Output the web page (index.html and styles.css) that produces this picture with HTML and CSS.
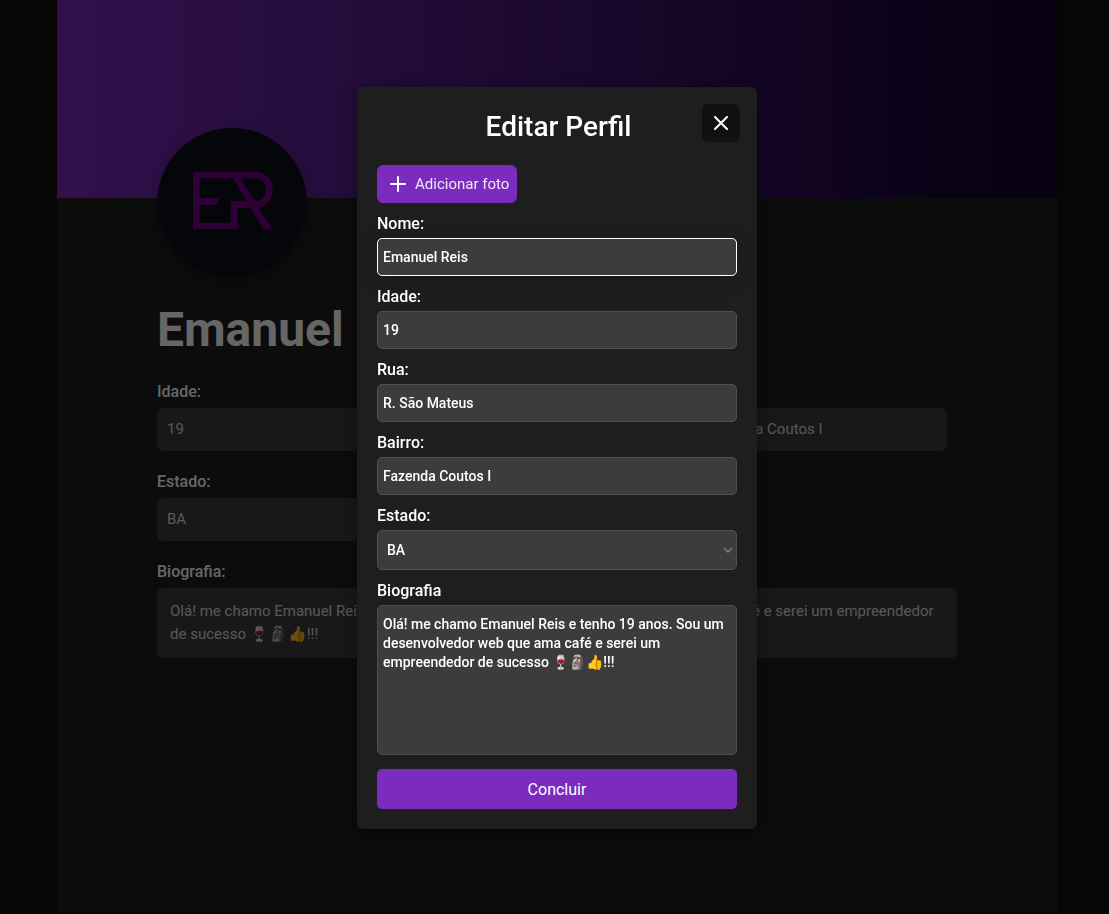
FILE: index.html
```html
<!DOCTYPE html>
<html lang="pt-BR">
<head>
<meta charset="utf-8">
<meta name="viewport" content="width=device-width, initial-scale=1">
<title>Editar Perfil</title>
<link rel="stylesheet" href="styles.css">
</head>
<body>
<main class="page">
  <div class="banner"></div>
  <section class="profile">
    <svg class="avatar" viewBox="21 24 450 450" role="img" aria-label="ER">
      <rect x="21" y="24" width="450" height="450" fill="#0d1117"/>
      <g fill="none" stroke="#77008c" stroke-width="20">
        <path d="M314 165H139V318H252V254H314A44.500 44.500 0 0 0 314 165"/>
      </g>
      <path fill="#77008c" d="M139 234H207L198 254H139ZM247 170L269 170L366 328H341Z"/>
    </svg>
    <h1 class="name">Emanuel Reis</h1>
    <dl class="facts">
      <div class="fact"><dt>Idade:</dt><dd>19</dd></div>
      <div class="fact"><dt>Rua:</dt><dd>R. São Mateus</dd></div>
      <div class="fact"><dt>Bairro:</dt><dd>Fazenda Coutos I</dd></div>
      <div class="fact"><dt>Estado:</dt><dd>BA</dd></div>
      <div class="fact fact-wide"><dt>Biografia:</dt><dd>Olá! me chamo Emanuel Reis e tenho 19 anos. Sou um desenvolvedor web que ama café e serei um empreendedor de sucesso 🍷🗿👍!!!</dd></div>
    </dl>
  </section>
</main>
<div class="overlay">
  <form class="modal" role="dialog" aria-labelledby="modal-title">
    <header class="modal-header">
      <h2 id="modal-title">Editar Perfil</h2>
      <button class="close" type="button" aria-label="Fechar">
        <svg viewBox="0 0 14 14" width="14" height="14"><path d="M1 1L13 13M13 1L1 13"/></svg>
      </button>
    </header>
    <button class="add-photo" type="button">
      <svg viewBox="0 0 16 16" width="16" height="16"><path d="M8 1V15M1 8H15"/></svg>
      Adicionar foto
    </button>
    <div class="field"><label for="nome">Nome:</label><input class="active" id="nome" type="text" value="Emanuel Reis"></div>
    <div class="field"><label for="idade">Idade:</label><input id="idade" type="text" value="19"></div>
    <div class="field"><label for="rua">Rua:</label><input id="rua" type="text" value="R. São Mateus"></div>
    <div class="field"><label for="bairro">Bairro:</label><input id="bairro" type="text" value="Fazenda Coutos I"></div>
    <div class="field">
      <label for="estado">Estado:</label>
      <div class="select-wrap">
        <select id="estado"><option>BA</option></select>
        <svg class="chevron" viewBox="0 0 10 6" width="10" height="6"><path d="M1 1L5 5L9 1"/></svg>
      </div>
    </div>
    <div class="field"><label for="bio">Biografia</label><textarea id="bio" spellcheck="false">Olá! me chamo Emanuel Reis e tenho 19 anos. Sou um desenvolvedor web que ama café e serei um empreendedor de sucesso 🍷🗿👍!!!</textarea></div>
    <button class="submit" type="submit">Concluir</button>
  </form>
</div>
</body>
</html>
```
FILE: styles.css
```css
* {
  box-sizing: border-box;
  margin: 0;
  padding: 0;
}

body {
  min-height: 100vh;
  padding-left: 5px;
  background: #101010;
  color: #fff;
  font-family: Roboto, "Noto Sans", sans-serif;
  font-size: 16px;
}

button, input, select, textarea {
  border: 0;
  color: inherit;
  font: inherit;
}

.page {
  max-width: 1000px;
  min-height: 912px;
  margin: 0 auto;
  background: #1e1e1e;
}

.banner {
  height: 198px;
  background: linear-gradient(to right, #7b2cbf, #10002b);
}

.profile {
  max-width: 800px;
  margin: -70px auto 0;
}

.avatar {
  display: block;
  width: 150px;
  height: 150px;
  border-radius: 50%;
  box-shadow: 0 4px 20px rgba(0, 0, 0, .2);
}

.name {
  margin: 22px 0 23px;
  font-size: 48px;
  line-height: 60px;
}

.facts {
  display: flex;
  flex-wrap: wrap;
  gap: 22px 20px;
}

.fact {
  width: 250px;
}

.fact-wide {
  width: 100%;
}

.fact dt {
  margin-bottom: 8px;
  font-weight: 500;
  line-height: 17px;
}

.fact dd {
  padding: 10px;
  border-radius: 6px;
  background: #3c3c3c;
  color: #ddd;
  font-size: 15px;
  line-height: 23px;
}

.fact-wide dd {
  padding: 12px 13px;
}

.overlay {
  position: fixed;
  inset: 0;
  display: flex;
  align-items: center;
  justify-content: center;
  padding: 2px 0 0 5px;
  background: rgba(0, 0, 0, .6);
}

.modal {
  display: flex;
  flex-direction: column;
  width: 400px;
  max-width: 100%;
  padding: 17px 20px 20px;
  border-radius: 6px;
  background: #1e1e1e;
  box-shadow: 0 4px 20px rgba(0, 0, 0, .4);
}

.modal-header {
  display: grid;
  grid-template-columns: 38px 1fr 38px;
  align-items: center;
  margin-right: -3px;
  margin-bottom: 23px;
}

.modal-header h2 {
  grid-column: 2;
  padding-top: 8px;
  font-size: 28px;
  font-weight: 500;
  line-height: 30px;
  text-align: center;
}

.close {
  display: grid;
  place-items: center;
  height: 38px;
  border-radius: 6px;
  background: #111;
}

.close svg, .add-photo svg {
  fill: none;
  stroke: #fff;
  stroke-width: 2;
  stroke-linecap: round;
}

.add-photo {
  display: flex;
  align-items: center;
  align-self: flex-start;
  gap: 9px;
  height: 38px;
  margin-bottom: 12px;
  padding: 0 8px 0 13px;
  border-radius: 6px;
  background: #7b2cbf;
  color: #f0e8f8;
  font-size: 15px;
}

.field {
  margin-bottom: 12px;
}

.field label {
  display: block;
  margin-bottom: 6px;
  font-weight: 500;
  line-height: 17px;
}

.field input, .field select, .field textarea {
  display: block;
  width: 100%;
  height: 38px;
  padding: 0 5px;
  border: 1px solid #505050;
  border-radius: 5px;
  outline: none;
  background: #3c3c3c;
  font-size: 14px;
  font-weight: 500;
}

.field .active {
  border-color: #fff;
  box-shadow: 0 4px 20px rgba(0, 0, 0, .2);
}

.select-wrap {
  display: grid;
  align-items: center;
}

.select-wrap > * {
  grid-area: 1 / 1;
}

.field select {
  height: 40px;
  padding: 0 9px;
  appearance: none;
}

.chevron {
  justify-self: end;
  margin-right: 4px;
  fill: none;
  stroke: #858585;
  stroke-width: 1.3;
  pointer-events: none;
}

.field textarea {
  height: 150px;
  padding: 9px 5px;
  line-height: 19px;
  resize: none;
}

.submit {
  height: 40px;
  margin-top: 2px;
  border-radius: 5px;
  background: #7b2cbf;
}
```
